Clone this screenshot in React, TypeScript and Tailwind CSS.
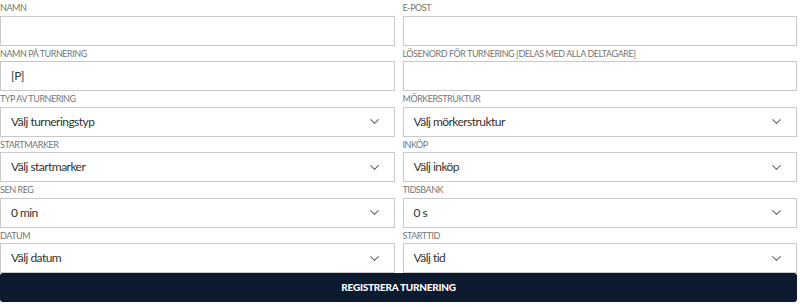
import { ChevronDown } from 'lucide-react';

type Field = { label: string; value?: string; select?: boolean };

const FIELDS: Field[] = [
  { label: 'Namn' },
  { label: 'E-post' },
  { label: 'Namn på turnering', value: '[P]' },
  { label: 'Lösenord för turnering [delas med alla deltagare]' },
  { label: 'Typ av turnering', value: 'Välj turneringstyp', select: true },
  { label: 'Mörkerstruktur', value: 'Välj mörkerstruktur', select: true },
  { label: 'Startmarker', value: 'Välj startmarker', select: true },
  { label: 'Inköp', value: 'Välj inköp', select: true },
  { label: 'Sen reg', value: '0 min', select: true },
  { label: 'Tidsbank', value: '0 s', select: true },
  { label: 'Datum', value: 'Välj datum', select: true },
  { label: 'Starttid', value: 'Välj tid', select: true },
];

export default function App() {
  return (
    <div className="w-[800px] h-[307px] bg-white" style={{ fontFamily: 'Lato, "Open Sans", sans-serif' }}>
      <div className="w-[797px]">
        <div className="grid grid-cols-2 gap-x-2">
          {FIELDS.map((f) => (
            <div key={f.label} className="flex flex-col">
              <label className="h-[15.5px] flex items-center text-[9px] uppercase text-[#767676] tracking-[-0.05em]">
                {f.label}
              </label>
              <div className="h-[30px] flex items-center justify-between border border-[#c9c9c9] pl-[10px] pr-[12px] text-[12px] text-[#333] tracking-[-0.045em]">
                <span>{f.value ?? ''}</span>
                {f.select && <ChevronDown className="w-[15px] h-[15px] text-[#666]" strokeWidth={1.75} />}
              </div>
            </div>
          ))}
        </div>
        <button
          type="button"
          className="w-full h-[29px] bg-[#0b1a2f] rounded-[3px] text-white text-[10px] font-black uppercase tracking-tight"
        >
          Registrera turnering
        </button>
      </div>
    </div>
  );
}
